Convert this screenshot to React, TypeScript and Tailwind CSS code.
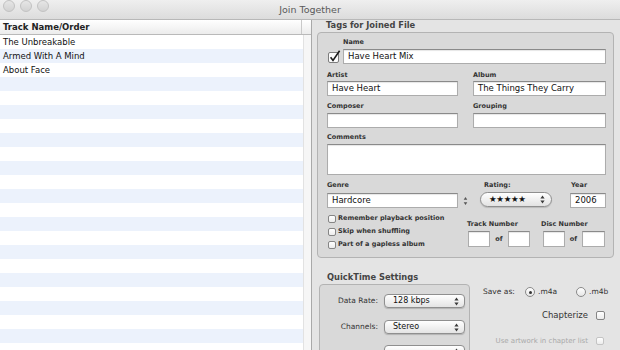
import React from 'react';

const tracks = ['The Unbreakable', 'Armed With A Mind', 'About Face'];
const rowCount = 23;

const label = 'h-[8px] text-[6.5px] font-bold leading-[8px] text-[#333]';

const Arrows = () => (
  <svg width="5" height="9" viewBox="0 0 5 9">
    <path d="M2.5 0.5 L4.6 3.6 H0.4 Z M2.5 8.5 L4.6 5.4 H0.4 Z" fill="#3a3a3a" />
  </svg>
);

const Field = ({ className = '', children }: { className?: string; children?: React.ReactNode }) => (
  <div
    className={`flex items-center border border-[#acacac] border-t-[#8a8a8a] bg-white pl-[4px] text-[8.5px] leading-none text-[#111] shadow-[inset_0_1px_1px_rgba(0,0,0,0.1)] ${className}`}>
    {children}
  </div>
);

const Popup = ({ value, className = '' }: { value: string; className?: string }) => (
  <div
    className={`flex items-center justify-between rounded-[4px] border border-[#8f8f8f] bg-linear-to-b from-white to-[#e4e4e4] pl-[8px] pr-[5px] text-[8px] leading-none text-[#111] shadow-[0_1px_1px_rgba(0,0,0,0.18)] ${className}`}>
    <span>{value}</span>
    <Arrows />
  </div>
);

const SmallBox = ({ disabled = false }: { disabled?: boolean }) => (
  <div
    className={cn(
      'h-[8px] w-[8px] shrink-0 rounded-[2px] border bg-linear-to-b from-white to-[#ececec]',
      disabled ? 'border-[#c4c4c4]' : 'border-[#858585]',
    )}
  />
);

const Radio = ({ on = false }: { on?: boolean }) => (
  <div className="flex h-[10px] w-[10px] shrink-0 items-center justify-center rounded-full border border-[#8a8a8a] bg-linear-to-b from-white to-[#e6e6e6]">
    {on && <div className="h-[3px] w-[3px] rounded-full bg-[#333]" />}
  </div>
);

function cn(...parts: (string | false | undefined)[]) {
  return parts.filter(Boolean).join(' ');
}

const TitleBar = () => (
  <div className="grid h-[20px] shrink-0 grid-cols-[1fr_auto_1fr] items-center border-b border-[#b8b8b8] bg-linear-to-b from-[#efefef] to-[#dcdcdc]">
    <div className="flex gap-[5px] self-start pl-[3px]">
      {[0, 1, 2].map((i) => (
        <div
          key={i}
          className="h-[12px] w-[12px] rounded-full border border-[#c2c2c2] bg-linear-to-b from-[#e6e6e6] to-[#d2d2d2]"
        />
      ))}
    </div>
    <div className="text-[9.5px] leading-none text-[#5a5a5a]">Join Together</div>
    <div />
  </div>
);

const TrackList = () => (
  <div className="flex w-[312px] shrink-0 flex-col border-r border-[#a9a9a9] bg-white">
    <div className="flex h-[15px] shrink-0 border-b border-[#b9b9b9] bg-linear-to-b from-white to-[#ececec]">
      <div className="w-[302px] border-r border-[#c9c9c9] pl-[3px] text-[8.5px] font-bold leading-[14px] text-[#222]">
        Track Name/Order
      </div>
    </div>
    <div className="flex min-h-0 flex-1">
      <div className="w-[303px] overflow-hidden">
        {Array.from({ length: rowCount }).map((_, i) => (
          <div
            key={i}
            className={cn(
              'h-[14px] pl-[3px] text-[8.5px] leading-[14px] text-[#111]',
              i % 2 === 1 && 'bg-[#ecf2fc]',
            )}>
            {tracks[i] ?? ''}
          </div>
        ))}
      </div>
      <div className="flex-1 border-l border-[#e2e2e2] bg-[#f6f6f6]" />
    </div>
  </div>
);

const TagsBox = () => (
  <div className="ml-[5px] flex h-[226px] w-[297px] shrink-0 flex-col rounded-[4px] border border-[#b3b3b3] bg-[#d9d9d9] pl-[9px] pr-[7px] pt-[5px]">
    <div className={`${label} ml-[16px]`}>Name</div>
    <div className="mt-[3px] flex h-[15px] items-center">
      <svg width="14" height="14" viewBox="0 0 14 14" className="ml-[1px] shrink-0">
        <rect x="0.5" y="2.5" width="10" height="10" rx="1.5" fill="#fbfbfb" stroke="#7d7d7d" />
        <path d="M2.6 7.2 L5 10.4 L11.6 0.8" fill="none" stroke="#1a1a1a" strokeWidth="1.6" />
      </svg>
      <Field className="ml-[1px] h-[15px] flex-1">Have Heart Mix</Field>
    </div>

    <div className="mt-[7px] flex gap-[15px]">
      <div className="flex w-[131px] flex-col">
        <div className={label}>Artist</div>
        <Field className="mt-[2px] h-[15px]">Have Heart</Field>
      </div>
      <div className="flex flex-1 flex-col">
        <div className={label}>Album</div>
        <Field className="mt-[2px] h-[15px]">The Things They Carry</Field>
      </div>
    </div>

    <div className="mt-[6px] flex gap-[15px]">
      <div className="flex w-[131px] flex-col">
        <div className={label}>Composer</div>
        <Field className="mt-[3px] h-[15px]" />
      </div>
      <div className="flex flex-1 flex-col">
        <div className={label}>Grouping</div>
        <Field className="mt-[3px] h-[15px]" />
      </div>
    </div>

    <div className={`${label} mt-[5px]`}>Comments</div>
    <Field className="mt-[3px] h-[31px]" />

    <div className="mt-[6px] flex">
      <div className="flex w-[131px] flex-col">
        <div className={label}>Genre</div>
        <Field className="mt-[4px] h-[15px]">Hardcore</Field>
      </div>
      <div className="ml-[5px] flex w-[8px] flex-col">
        <div className="h-[8px]" />
        <div className="mt-[6px] flex h-[12px] items-center">
          <svg width="5" height="10" viewBox="0 0 5 10">
            <path d="M2.5 1 L4.3 3.8 H0.7 Z M2.5 9 L4.3 6.2 H0.7 Z" fill="#555" />
          </svg>
        </div>
      </div>
      <div className="ml-[9px] flex w-[72px] flex-col">
        <div className={`${label} pl-[4px]`}>Rating:</div>
        <div className="mt-[3px] flex h-[15px] items-center justify-between rounded-full border border-[#8f8f8f] bg-linear-to-b from-white to-[#e2e2e2] pl-[8px] pr-[6px] shadow-[0_1px_1px_rgba(0,0,0,0.15)]">
          <span className="text-[8.5px] leading-none tracking-[-0.3px] text-[#111]">★★★★★</span>
          <Arrows />
        </div>
      </div>
      <div className="ml-[18px] flex flex-1 flex-col">
        <div className={`${label} pl-[1px]`}>Year</div>
        <Field className="mt-[4px] h-[15px]">2006</Field>
      </div>
    </div>

    <div className="mt-[4px] flex">
      <div className="flex w-[140px] flex-col">
        {['Remember playback position', 'Skip when shuffling', 'Part of a gapless album'].map((t) => (
          <div key={t} className="flex h-[13px] items-center gap-[2px] pl-[1px]">
            <SmallBox />
            <span className="text-[6.5px] font-bold leading-none text-[#333]">{t}</span>
          </div>
        ))}
      </div>
      <div className="mt-[8px] flex w-[63px] flex-col">
        <div className={label}>Track Number</div>
        <div className="mt-[3px] flex items-center">
          <Field className="ml-[1px] h-[16px] w-[22px]" />
          <span className={`${label} w-[18px] text-center`}>of</span>
          <Field className="h-[16px] w-[22px]" />
        </div>
      </div>
      <div className="ml-[11px] mt-[8px] flex flex-1 flex-col">
        <div className={label}>Disc Number</div>
        <div className="mt-[3px] flex items-center">
          <Field className="ml-[2px] h-[16px] w-[22px]" />
          <span className={`${label} w-[17px] text-center`}>of</span>
          <Field className="h-[16px] w-[23px]" />
        </div>
      </div>
    </div>
  </div>
);

const QuickTime = () => (
  <div className="flex min-h-0 flex-1">
    <div className="ml-[7px] flex w-[151px] shrink-0 flex-col">
      <div className="mt-[15px] h-[8px] pl-[8px] text-[8.3px] font-bold leading-[8px] text-[#444]">
        QuickTime Settings
      </div>
      <div className="mt-[3px] flex h-[90px] shrink-0 flex-col rounded-[4px] border border-[#b3b3b3] bg-[#d9d9d9] pt-[9px]">
        {[
          ['Data Rate:', '128 kbps', 'mt-0'],
          ['Channels:', 'Stereo', 'mt-[12px]'],
          ['', '', 'mt-[11px]'],
        ].map(([l, v, m], i) => (
          <div key={i} className={`flex h-[14px] shrink-0 items-center ${m}`}>
            <div className="w-[58px] text-right text-[7.5px] leading-none text-[#333]">{l}</div>
            <Popup value={v} className="ml-[6px] h-[14px] w-[81px]" />
          </div>
        ))}
      </div>
    </div>

    <div className="flex flex-1 flex-col pt-[28px]">
      <div className="ml-[13px] flex h-[12px] items-center text-[7.5px] leading-none text-[#333]">
        <span className="w-[42px]">Save as:</span>
        <div className="flex w-[51px] items-center gap-[3px]">
          <Radio on />
          <span>.m4a</span>
        </div>
        <div className="flex items-center gap-[3px]">
          <Radio />
          <span>.m4b</span>
        </div>
      </div>
      <div className="mt-[11px] flex h-[12px] items-center justify-end gap-[8px] pr-[15px] text-[8.5px] leading-none text-[#333]">
        <span>Chapterize</span>
        <div className="h-[9px] w-[9px] rounded-[2px] border border-[#858585] bg-linear-to-b from-white to-[#ececec]" />
      </div>
      <div className="mt-[14px] flex h-[12px] items-center justify-end gap-[8px] pr-[16px] text-[7px] leading-none text-[#a9a9a9]">
        <span>Use artwork in chapter list</span>
        <SmallBox disabled />
      </div>
    </div>
  </div>
);

export default function App() {
  return (
    <div className="flex h-[350px] w-[620px] flex-col overflow-hidden bg-[#e4e4e4] font-['DejaVu_Sans',sans-serif]">
      <TitleBar />
      <div className="flex min-h-0 flex-1">
        <TrackList />
        <div className="flex min-w-0 flex-1 flex-col">
          <div className="ml-[14px] h-[10px] shrink-0 text-[8.3px] font-bold leading-[10px] text-[#444]">
            Tags for Joined File
          </div>
          <div className="mt-[2px]" />
          <TagsBox />
          <QuickTime />
        </div>
      </div>
    </div>
  );
}
